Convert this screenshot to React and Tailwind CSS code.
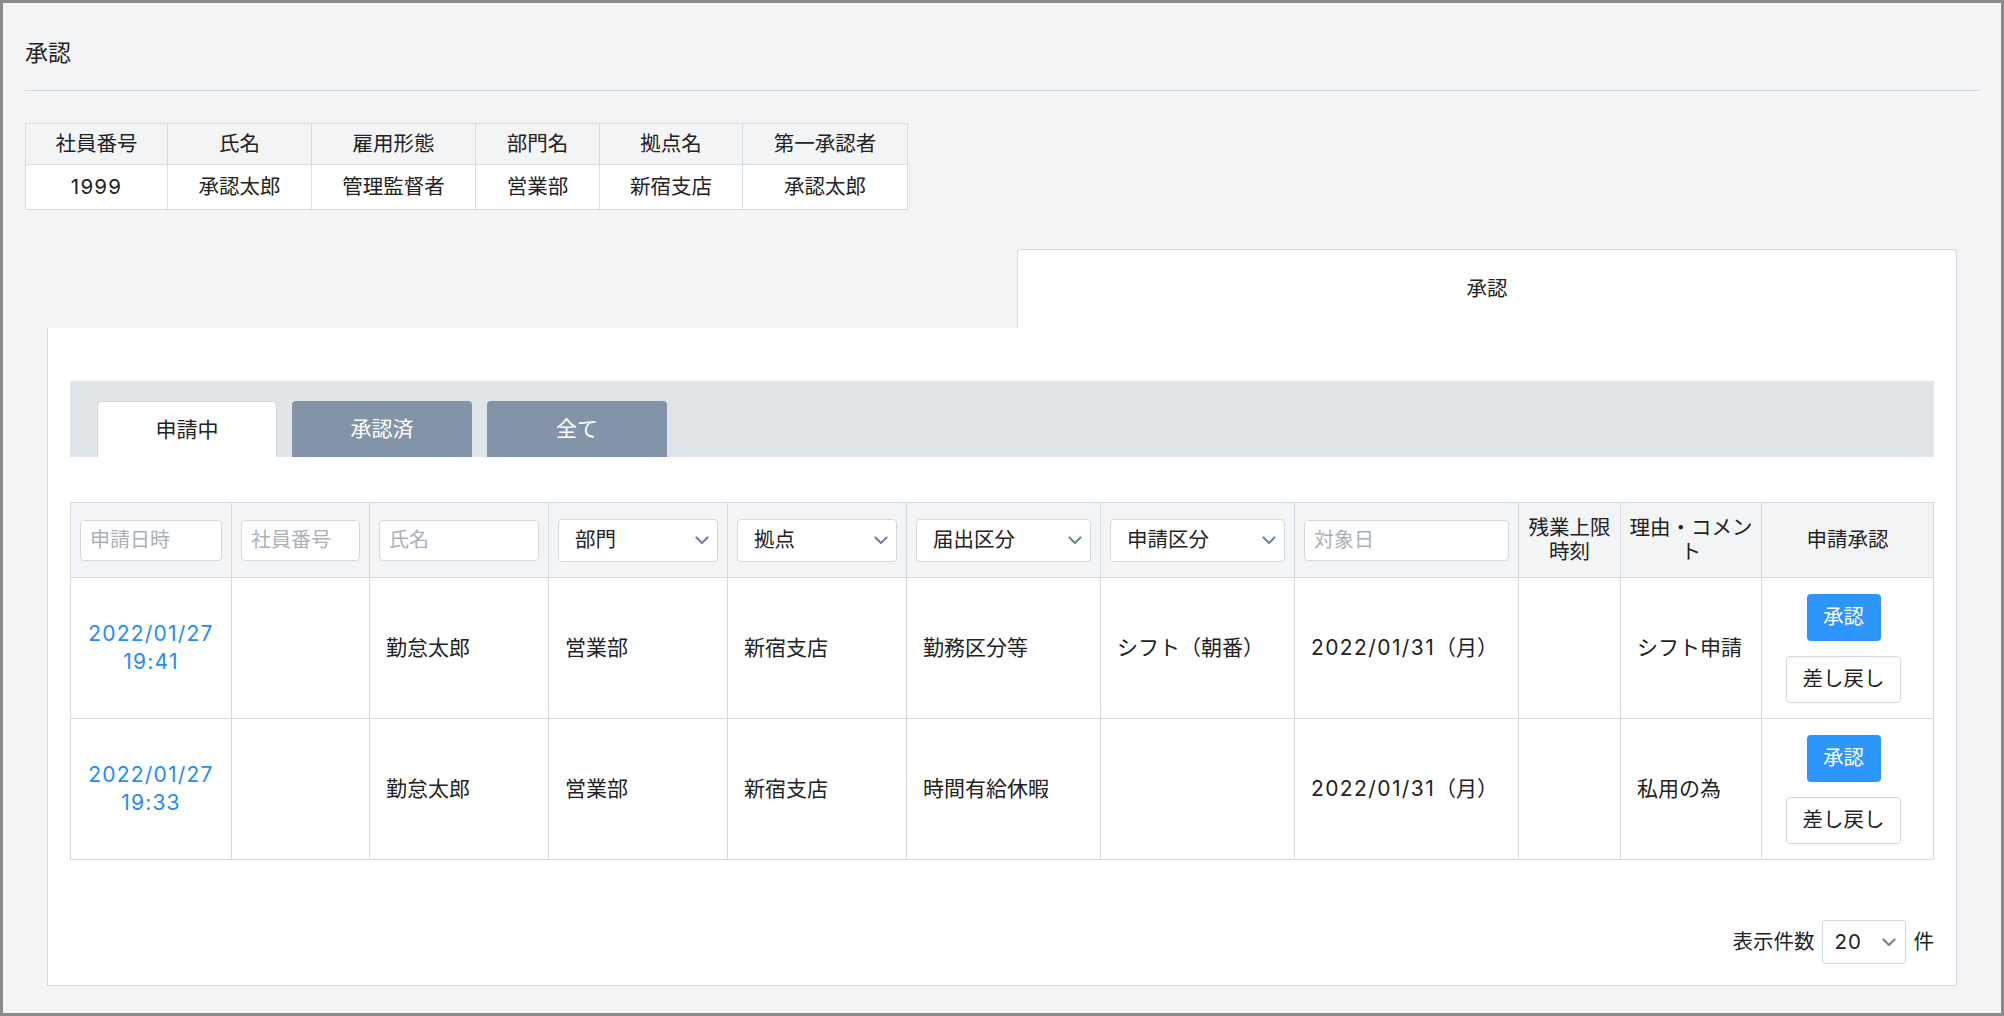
import React from "react";

const cols = [161, 138, 179, 179, 179, 194, 194, 224, 102, 141, 172];

const rows = [
  {
    date: "2022/01/27",
    time: "19:41",
    name: "勤怠太郎",
    dept: "営業部",
    site: "新宿支店",
    kind: "勤務区分等",
    app: "シフト（朝番）",
    target: "2022/01/31",
    limit: "",
    reason: "シフト申請",
  },
  {
    date: "2022/01/27",
    time: "19:33",
    name: "勤怠太郎",
    dept: "営業部",
    site: "新宿支店",
    kind: "時間有給休暇",
    app: "",
    target: "2022/01/31",
    limit: "",
    reason: "私用の為",
  },
];

const Chevron = () => (
  <svg width="14" height="9" viewBox="0 0 14 9" fill="none">
    <polyline
      points="1.5,1.5 7,7 12.5,1.5"
      stroke="#74849a"
      strokeWidth="2.2"
      strokeLinecap="round"
      strokeLinejoin="round"
    />
  </svg>
);

const FilterInput = ({ placeholder }) => (
  <input
    placeholder={placeholder}
    className="w-full h-[41px] px-[9px] bg-white border border-[#d3d9df] rounded-[4px] text-[20px] text-[#222] placeholder:text-[#abb2ba] outline-none"
  />
);

const FilterSelect = ({ label }) => (
  <div className="w-full h-[43px] pl-[16px] pr-[8px] bg-white border border-[#d3d9df] rounded-[4px] flex items-center justify-between text-[20.5px] text-[#222]">
    <span>{label}</span>
    <Chevron />
  </div>
);

const InfoTable = () => {
  const heads = ["社員番号", "氏名", "雇用形態", "部門名", "拠点名", "第一承認者"];
  const vals = ["1999", "承認太郎", "管理監督者", "営業部", "新宿支店", "承認太郎"];
  const widths = [142, 144, 164, 124, 143, 165];
  return (
    <table className="border-collapse text-[20.5px] text-[#222] mt-[32px]">
      <colgroup>
        {widths.map((w, i) => (
          <col key={i} style={{ width: w }} />
        ))}
      </colgroup>
      <tbody>
        <tr className="h-[41px] bg-[#f3f4f6]">
          {heads.map((h) => (
            <td key={h} className="border border-[#d5dce3] text-center">
              {h}
            </td>
          ))}
        </tr>
        <tr className="h-[45px] bg-white">
          {vals.map((v, i) => (
            <td
              key={i}
              className={`border border-[#d5dce3] text-center ${i === 0 ? "tracking-[1.2px]" : ""}`}
            >
              {v}
            </td>
          ))}
        </tr>
      </tbody>
    </table>
  );
};

const ListTable = () => {
  const cell = "border border-[#d3dae2]";
  return (
    <table className="border-collapse text-[21px] text-[#222] mt-[45px] w-[1863px] table-fixed">
      <colgroup>
        {cols.map((w, i) => (
          <col key={i} style={{ width: w }} />
        ))}
      </colgroup>
      <thead>
        <tr className="h-[75px] bg-[#f3f4f6]">
          <th className={`${cell} px-[9px] font-normal`}>
            <FilterInput placeholder="申請日時" />
          </th>
          <th className={`${cell} px-[9px] font-normal`}>
            <FilterInput placeholder="社員番号" />
          </th>
          <th className={`${cell} px-[9px] font-normal`}>
            <FilterInput placeholder="氏名" />
          </th>
          <th className={`${cell} px-[9px] font-normal`}>
            <FilterSelect label="部門" />
          </th>
          <th className={`${cell} px-[9px] font-normal`}>
            <FilterSelect label="拠点" />
          </th>
          <th className={`${cell} px-[9px] font-normal`}>
            <FilterSelect label="届出区分" />
          </th>
          <th className={`${cell} px-[9px] font-normal`}>
            <FilterSelect label="申請区分" />
          </th>
          <th className={`${cell} px-[9px] font-normal`}>
            <FilterInput placeholder="対象日" />
          </th>
          <th className={`${cell} font-normal text-[20.5px] leading-[24px] text-center`}>
            <div>残業上限</div>
            <div>時刻</div>
          </th>
          <th className={`${cell} font-normal text-[20.5px] leading-[24px] text-center`}>
            <div>理由・コメン</div>
            <div>ト</div>
          </th>
          <th className={`${cell} font-normal text-[20.5px] text-center`}>申請承認</th>
        </tr>
      </thead>
      <tbody>
        {rows.map((r, i) => (
          <tr key={i} className="h-[141px] bg-white">
            <td className={`${cell} text-center text-[#248bf8] leading-[28px] tracking-[1.2px]`}>
              {r.date}
              <br />
              {r.time}
            </td>
            <td className={cell}></td>
            <td className={`${cell} px-4`}>{r.name}</td>
            <td className={`${cell} px-4`}>{r.dept}</td>
            <td className={`${cell} px-4`}>{r.site}</td>
            <td className={`${cell} px-4`}>{r.kind}</td>
            <td className={`${cell} px-4`}>{r.app}</td>
            <td className={`${cell} px-4`}>
              <span className="tracking-[1.4px]">{r.target}</span>（月）
            </td>
            <td className={`${cell} px-4`}>{r.limit}</td>
            <td className={`${cell} px-4`}>{r.reason}</td>
            <td className={`${cell} pr-[8px]`}>
              <div className="flex flex-col items-center gap-[15px]">
                <button className="w-[74px] h-[47px] rounded-[4px] bg-[#2d96fd] text-white text-[20.5px]">
                  承認
                </button>
                <button className="w-[115px] h-[47px] rounded-[4px] bg-white border border-[#cfd6dd] text-[#222] text-[20.5px]">
                  差し戻し
                </button>
              </div>
            </td>
          </tr>
        ))}
      </tbody>
    </table>
  );
};

export default function App() {
  return (
    <div className="w-[2004px] h-[1016px] border-[3px] border-[#8a8a8a] bg-[#f3f4f6] font-['Inter','Noto_Sans_CJK_JP','Noto_Sans',sans-serif] text-[#222] overflow-hidden">
      <div className="px-[22px]">
        <div className="h-[88px] pt-[14px] flex items-center border-b border-[#d5d9de] text-[23px]">
          承認
        </div>
        <InfoTable />

        <div className="mx-[22px] mt-[39px]">
          <div className="flex justify-end">
            <div className="w-[940px] h-[79px] bg-white border border-b-0 border-[#d3d8de] rounded-t-[4px] flex items-center justify-center text-[20.5px]">
              承認
            </div>
          </div>

          <div className="h-[658px] bg-white border border-t-0 border-[#d3d8de] px-[22px] pt-[53px] flex flex-col">
            <div className="h-[76px] bg-[#e0e5e9] px-[27px] flex items-end gap-[15px]">
              <div className="w-[180px] h-[56px] bg-white border border-b-0 border-[#d0d6dc] rounded-t-[4px] flex items-center justify-center text-[21px]">
                申請中
              </div>
              <div className="w-[180px] h-[56px] bg-[#8394a8] rounded-t-[4px] flex items-center justify-center text-[21px] text-white">
                承認済
              </div>
              <div className="w-[180px] h-[56px] bg-[#8394a8] rounded-t-[4px] flex items-center justify-center text-[21px] text-white">
                全て
              </div>
            </div>

            <ListTable />

            <div className="mt-[60px] flex justify-end items-center text-[20.5px]">
              <span>表示件数</span>
              <div className="ml-[7px] w-[84px] h-[44px] bg-white border border-[#d3d9df] rounded-[4px] flex items-center justify-between pl-[12px] pr-[9px]">
                <span className="tracking-[1px]">20</span>
                <Chevron />
              </div>
              <span className="ml-[8px]">件</span>
            </div>
          </div>
        </div>
      </div>
    </div>
  );
}
